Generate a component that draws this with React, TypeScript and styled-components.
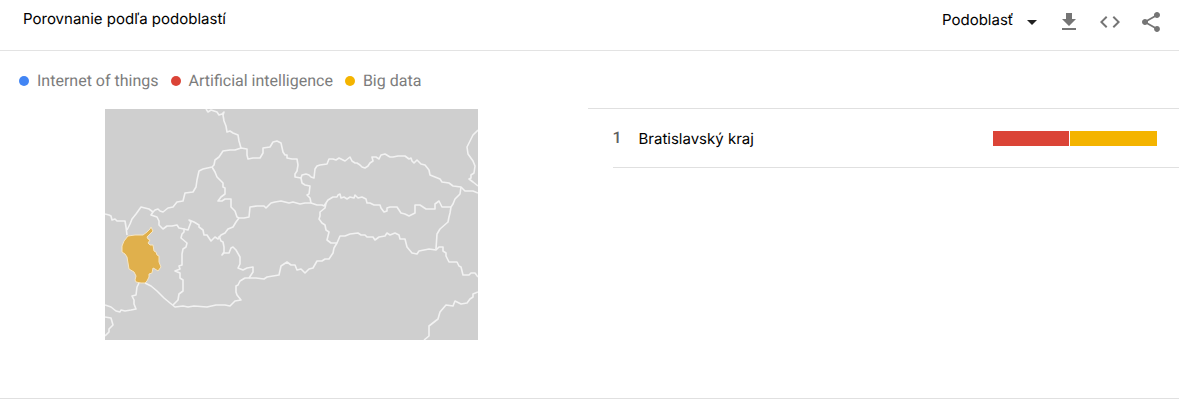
import React from "react";
import styled, { createGlobalStyle } from "styled-components";
import { MdArrowDropDown, MdCode, MdGetApp, MdShare } from "react-icons/md";

const GlobalStyle = createGlobalStyle`
  *, *::before, *::after { box-sizing: border-box; }
  body {
    margin: 0;
    background: #fff;
    font-family: Roboto, "Liberation Sans", sans-serif;
    font-size: 16px;
    text-rendering: geometricPrecision;
  }
`;

const Widget = styled.section`
  display: flex;
  flex-direction: column;
  border-bottom: 1px solid #e0e0e0;
`;

const Header = styled.header`
  display: flex;
  align-items: center;
  justify-content: space-between;
  padding: 0 16px 6px 23px;
  height: 51px;
  border-bottom: 1px solid #e3e3e3;
`;

const Title = styled.h2`
  margin: 0;
  padding-bottom: 6px;
  font: 400 15px/20px Inter, sans-serif;
  color: #000;
`;

const Toolbar = styled.div`
  display: flex;
  align-items: center;
  gap: 17px;
`;

const Picker = styled.label`
  display: grid;
  align-items: center;
  margin-right: -4px;
  color: #212121;

  > * { grid-area: 1 / 1; }
  > svg { justify-self: end; pointer-events: none; }
`;

const Select = styled.select`
  appearance: none;
  margin: 0;
  padding: 0 24px 4px 0;
  width: 102px;
  border: 0;
  background: none;
  font: 400 15px/20px Inter, sans-serif;
  text-rendering: inherit;
  color: #000;
`;

const IconButton = styled.button`
  display: flex;
  padding: 0;
  border: 0;
  background: none;
  color: #757575;
  cursor: pointer;
`;

const Legend = styled.ul`
  display: flex;
  flex-wrap: wrap;
  gap: 12px;
  margin: 0;
  padding: 20px 19px 17px;
  list-style: none;
`;

const LegendItem = styled.li`
  display: flex;
  align-items: center;
  gap: 8px;
  line-height: 20px;
  color: #7c7c7c;
`;

const Dot = styled.span<{ $color: string }>`
  width: 10px;
  height: 10px;
  border-radius: 50%;
  background: ${(p) => p.$color};
`;

const Content = styled.div`
  display: grid;
  grid-template-columns: minmax(0, 1fr) calc(50% + 2px);
  padding-bottom: 58px;
`;

const MapPane = styled.div`
  padding: 1px 0 0 105px;
`;

const MapImage = styled.svg`
  display: block;
  width: 100%;
  max-width: 373px;
  background: #cfcfcf;
`;

const RegionList = styled.ol`
  margin: 0;
  padding: 0 0 0 25px;
  list-style: none;
  border-top: 1px solid #e0e0e0;
`;

const RegionRow = styled.li`
  display: flex;
  align-items: center;
  height: 59px;
  padding-right: 22px;
  border-bottom: 1px solid #e0e0e0;
`;

const Rank = styled.span`
  width: 26px;
  font-weight: 500;
  line-height: 20px;
  color: #616161;
`;

const RegionName = styled.span`
  flex: 1;
  padding-top: 2px;
  font: 400 15px/20px Inter, sans-serif;
  color: #000;
`;

const Bar = styled.div`
  display: flex;
  gap: 1px;
  width: 164px;
  height: 15px;
`;

const Segment = styled.span<{ $color: string; $share: number }>`
  flex: ${(p) => p.$share} 0 0;
  background: ${(p) => p.$color};
`;

const BLUE = "#4285f4";
const RED = "#db4437";
const YELLOW = "#f4b400";

const terms = [
  { label: "Internet of things", color: BLUE },
  { label: "Artificial intelligence", color: RED },
  { label: "Big data", color: YELLOW },
];

const regions = [
  {
    name: "Bratislavský kraj",
    shares: [
      { color: RED, share: 76 },
      { color: YELLOW, share: 87 },
    ],
  },
];

const borders = [
  "206,109 208,112 211,110 217,112 219,115 222,114 224,112 223,115 224,121 226,126 227,132 230,131 233,133 238,135 239,141 241,148",
  "105,214 109,215 111,216 112,220 115,219 117,221 121,221 125,221 126,227 127,235",
  "127,230 130,224 132,219 136,214 141,207 145,208 149,209 153,212 155,210 158,209 160,211 163,212 168,208 173,207 177,202 183,201 185,193 193,192 196,187 197,180 199,171 203,169 212,167 214,165 215,160 219,157 223,151 230,150 235,150 241,148 247,149 247,155 248,159 253,158 260,158 263,153 263,148 270,147 273,142 277,141 281,143 283,152 285,155 287,155 287,158 292,159 297,159 298,165 297,171 295,174 295,177 301,178 302,175 306,174 309,175 311,177 314,178 315,169 317,166 320,165 327,164 329,159 333,159 336,160 339,158 345,161 350,157 352,161 355,163 357,163 360,165 362,167 365,168 368,166 370,163 373,161 372,157 376,157 379,159 381,155 385,154 390,157 393,157 398,156 405,156 409,159 411,158 412,161 414,163 417,160 421,164 425,165 429,170 430,175 435,177 440,179 442,182 449,183 453,186 461,187 465,191 473,191 478,193",
  "478,130 473,135 467,147 468,154 473,161 475,166 474,173 471,175 471,178 469,179 473,182 478,186",
  "461,187 460,194 455,199 453,204 451,207 450,213 449,217 448,222 440,229 437,234 436,249",
  "212,167 215,172 217,177 223,183 223,187 225,188 225,194 221,197 218,201 222,201 225,199 231,199 231,207 235,211 237,217 239,218",
  "301,178 302,183 305,185 310,186 309,194 307,195 310,198 311,203",
  "239,218 244,218 249,217 250,207 257,206 264,206 266,208 271,203 275,202 281,201 289,203 293,202 300,204 305,203 311,203 317,205 322,205 324,206 328,200 333,197 337,197 338,195 340,194 341,198 344,197 347,199 350,197 354,198 355,195 358,198 362,197 366,199 367,203 370,203 374,205 380,205 381,208 384,212 387,211 387,208 390,207 397,207 401,213 405,214 409,216 415,213 415,205 420,205 423,207 426,209 435,209 435,204 439,201 442,207 451,207",
  "326,203 325,208 320,212 320,216 319,219 322,223 325,225 326,230 329,232 327,240 331,243 337,243",
  "153,212 151,215 157,217 159,221 159,225 163,229 167,226 172,226 177,225 179,228 184,229 184,232 182,234 181,238 187,243 186,247 183,249 182,254 182,265 179,266 180,269 175,271 180,273 180,278 183,280 183,291 179,294 178,300 173,305",
  "184,229 188,230 191,222 189,220 194,222 199,225 199,227 203,230 204,235 207,235 211,241 215,237 218,239 221,235 225,233 228,229 233,227 236,222 239,218",
  "219,236 221,241 223,242 224,247 224,252 222,255 224,253 229,253 231,248 233,247 236,250 240,257 240,264 238,268 243,270 247,268 253,267 253,272 249,278",
  "145,283 151,286 157,291 164,298 170,303 175,307 183,306 188,307 194,306 207,307 216,305 225,305 230,306 235,301 241,300 237,295 236,292 236,286 238,285 240,281 245,278 249,278 256,278 264,279 267,277 279,275 281,266 287,262 291,265 295,265 297,270 301,269 305,273 309,269 313,268 317,261 322,261 325,259 329,259 333,253 334,248 337,243 340,236 345,236 350,234 358,233 361,235 365,235 367,237 373,237 375,240 379,237 385,236 387,233 390,235 395,233 399,235 400,239 405,239 407,247 412,253 417,254 419,251 429,249 436,250 439,247 443,247 443,251 446,253 446,256 449,262 457,262 459,266 461,267 463,275 469,275 471,273 475,273 478,277",
  "478,292 473,294 473,297 470,299 467,303 461,304 455,301 453,306 446,305 440,312 438,319 429,326 429,336 424,340",
  "139,283 137,287 136,295 132,296 134,300 134,304 136,309 131,310 125,311 121,310 120,312 116,311 111,307 105,305",
  "105,317 111,318 113,325 109,329 109,332 105,336",
];

const highlighted =
  "151,227 153,231 150,234 147,237 148,239 150,240 148,243 150,245 153,245 154,251 156,252 157,255 159,256 159,262 161,267 158,271 155,269 153,268 152,273 149,274 149,277 147,281 145,283 141,283 136,282 135,280 136,276 134,272 129,269 128,263 127,257 125,254 122,252 122,246 124,241 128,236 135,235 143,235 147,232 150,229";

function SlovakiaMap() {
  return (
    <MapImage viewBox="105 109 373 231" role="img" aria-label="Slovensko">
      <g fill="none" stroke="#f2f2f2" strokeWidth="1.6" strokeLinejoin="round">
        {borders.map((points) => (
          <polyline key={points} points={points} />
        ))}
      </g>
      <polygon points={highlighted} fill="#e0b04c" stroke="#f6e6c4" strokeWidth="1" strokeLinejoin="round" />
    </MapImage>
  );
}

export default function App() {
  return (
    <>
      <GlobalStyle />
      <Widget>
        <Header>
          <Title>Porovnanie podľa podoblastí</Title>
          <Toolbar>
            <Picker>
              <Select aria-label="Rozlíšenie">
                <option>Podoblasť</option>
              </Select>
              <MdArrowDropDown size={24} />
            </Picker>
            <IconButton type="button" aria-label="Stiahnuť">
              <MdGetApp size={24} />
            </IconButton>
            <IconButton type="button" aria-label="Vložiť">
              <MdCode size={24} />
            </IconButton>
            <IconButton type="button" aria-label="Zdieľať">
              <MdShare size={24} />
            </IconButton>
          </Toolbar>
        </Header>
        <Legend>
          {terms.map((term) => (
            <LegendItem key={term.label}>
              <Dot $color={term.color} />
              {term.label}
            </LegendItem>
          ))}
        </Legend>
        <Content>
          <MapPane>
            <SlovakiaMap />
          </MapPane>
          <RegionList>
            {regions.map((region, index) => (
              <RegionRow key={region.name}>
                <Rank>{index + 1}</Rank>
                <RegionName>{region.name}</RegionName>
                <Bar>
                  {region.shares.map((s) => (
                    <Segment key={s.color} $color={s.color} $share={s.share} />
                  ))}
                </Bar>
              </RegionRow>
            ))}
          </RegionList>
        </Content>
      </Widget>
    </>
  );
}
